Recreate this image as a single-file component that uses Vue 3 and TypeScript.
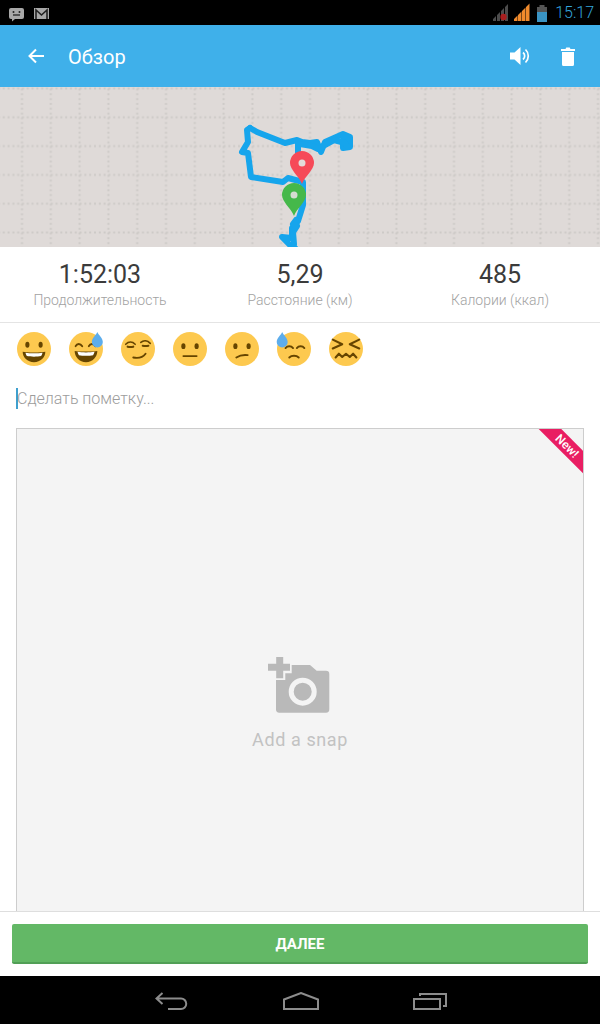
<script setup lang="ts">
const stats = [
  { value: '1:52:03', label: 'Продолжительность' },
  { value: '5,29', label: 'Расстояние (км)' },
  { value: '485', label: 'Калории (ккал)' },
]
const routeTop = '250,128 257,132 285,143 297,140 302,142 310,143 317,142 321,152 325,142 343,134 350,137 350,147 343,148 343,140 350,138'
const routeTopBack = '300,144 312,146 318,149 323,146 334,140 345,143 347,146'
const routeLeft = '250,128 247,130 248,142 242,152 248,153 251,177 283,182 288,178 303,182 303,205 298,221 292,228 292,238 282,237 290,245 295,248'
const routeLower = '296,220 293,224 297,226 293,232 294,244'
const routeBranch = '298,142 298,155'
</script>

<template>
  <div class="screen">
    <div class="status">
      <svg class="status-left" width="50" height="25" viewBox="0 0 50 25">
        <path d="M11 8h11a2 2 0 0 1 2 2v7a2 2 0 0 1-2 2h-7l-3 2.500v-2.500h-1a2 2 0 0 1-2-2v-7a2 2 0 0 1 2-2z" fill="#a8a8a8" />
        <circle cx="13.500" cy="12" r="1" fill="#222" />
        <circle cx="19.500" cy="12" r="1" fill="#222" />
        <path d="M13 15h7" stroke="#222" stroke-width="1.300" />
        <rect x="34" y="8" width="15" height="11" fill="#a8a8a8" />
        <path d="M36 19v-9l5.500 5 5.500-5v9" fill="none" stroke="#222" stroke-width="1.600" />
      </svg>
      <div class="status-right">
        <svg width="56" height="25" viewBox="0 0 56 25">
          <path d="M1 21v-2l3-3v5zM5 21v-6l3-3v9zM9 21V11l3-3v13zM13 21V7l3-3v17z" fill="#4c4c4c" />
          <circle cx="11.500" cy="17" r="3.200" fill="#a81e1e" />
          <path d="M22 21v-2l3.500-3.500V21zM26 21v-6l3.500-3.500V21zM30 21V11l3.500-3.500V21zM34 21V7l3.500-3.500V21z" fill="#f08a2c" />
          <rect x="45" y="7" width="10" height="15" fill="#555" />
          <rect x="47.500" y="5" width="5" height="2" fill="#555" />
          <rect x="45" y="12" width="10" height="10" fill="#3a94c4" />
        </svg>
        <span class="time">15:17</span>
      </div>
    </div>

    <header class="appbar">
      <svg class="back" width="18" height="18" viewBox="0 0 18 18">
        <path d="M17 9H3M9 2.500 2.500 9 9 15.500" fill="none" stroke="#fff" stroke-width="2" />
      </svg>
      <h1 class="title">Обзор</h1>
      <svg class="speaker" width="22" height="20" viewBox="0 0 22 20">
        <path d="M0 6.500h4.500L10.500 1v18l-6-5.500H0z" fill="#fff" />
        <path d="M13 6.500a4.500 4.500 0 0 1 0 7M15.500 3.500a9 9 0 0 1 0 13" fill="none" stroke="#fff" stroke-width="1.700" />
      </svg>
      <svg class="trash" width="14" height="19" viewBox="0 0 14 19">
        <path d="M1 5h12v12.500a1.500 1.500 0 0 1-1.500 1.500h-9A1.500 1.500 0 0 1 1 17.500zM0 2h4.500l.8-1.500h3.400L9.500 2H14v2H0z" fill="#fff" />
      </svg>
    </header>

    <div class="map">
      <svg class="map-svg" width="600" height="160" viewBox="0 87 600 160">
        <defs>
          <pattern id="grid" x="7.600" y="74.100" width="28.800" height="28.800" patternUnits="userSpaceOnUse">
            <path d="M14.400 0V28.800" stroke="#cdcac7" stroke-width="2" stroke-dasharray="2 2.800" fill="none" />
            <path d="M0 14.400H28.800" stroke="#cdcac7" stroke-width="2" stroke-dasharray="2 2.800" fill="none" />
          </pattern>
        </defs>
        <rect x="0" y="87" width="600" height="160" fill="#dfdad8" />
        <rect x="0" y="87" width="600" height="160" fill="url(#grid)" />
        <g fill="none" stroke="#16a5ec" stroke-width="6" stroke-linejoin="round" stroke-linecap="round">
          <polyline :points="routeTop" />
          <polyline :points="routeTopBack" />
          <polyline :points="routeLeft" />
          <polyline :points="routeLower" />
          <polyline :points="routeBranch" />
        </g>
        <path d="M302 184c-3-8-12-14-12-21a12 12 0 0 1 24 0c0 7-9 13-12 21z" fill="#f64a58" />
        <circle cx="302" cy="163" r="3.500" fill="#e4dcda" />
        <path d="M294 216c-3-8-12-14-12-21a12 12 0 0 1 24 0c0 7-9 13-12 21z" fill="#45b84a" />
        <circle cx="294" cy="195" r="3.500" fill="#d5dcd0" />
      </svg>
    </div>

    <section class="stats">
      <div v-for="s in stats" :key="s.label" class="stat">
        <div class="stat-value">{{ s.value }}</div>
        <div class="stat-label">{{ s.label }}</div>
      </div>
    </section>

    <div class="emojis">
      <svg class="emoji" viewBox="0 0 36 36">
        <circle cx="18" cy="18" r="18" fill="#fdc94f" />
        <ellipse cx="11" cy="13.500" rx="2.200" ry="3.200" fill="#664500" />
        <ellipse cx="25" cy="13.500" rx="2.200" ry="3.200" fill="#664500" />
        <path d="M6 21c4 1 20 1 24 0 0 6-5 11-12 11S6 27 6 21z" fill="#664500" />
        <path d="M9 22c5 .8 13 .8 18 0-.3 1.500-1 3-1.500 3.500-4 .8-11 .8-15 0-.5-.5-1.200-2-1.500-3.500z" fill="#fff" />
      </svg>
      <svg class="emoji" viewBox="0 0 36 36">
        <circle cx="18" cy="18" r="18" fill="#fdc94f" />
        <path d="M7 15c1.500-3 5-3 7 0M21 15c1.500-3 5-3 7 0" fill="none" stroke="#664500" stroke-width="2" stroke-linecap="round" />
        <path d="M6 20c4 1 20 1 24 0 0 6-5 12-12 12S6 26 6 20z" fill="#664500" />
        <path d="M9 21c5 .8 13 .8 18 0-.3 1.500-1 3-1.500 3.500-4 .8-11 .8-15 0-.5-.5-1.200-2-1.500-3.500z" fill="#fff" />
        <path d="M30 0c-1 3-5.800 6-5.800 10.500a5.800 5.800 0 0 0 11.600 0C35.800 6 31 3 30 0z" fill="#5dadec" />
      </svg>
      <svg class="emoji" viewBox="0 0 36 36">
        <circle cx="18" cy="18" r="18" fill="#fdc94f" />
        <path d="M5 13c3-3 7-3 10 0M21 11c3-2.500 7-2 10 1" fill="none" stroke="#664500" stroke-width="1.700" stroke-linecap="round" />
        <path d="M7 15.500c2 .5 4 .5 6 0M23 14.500c2 .5 4 .5 6 0" fill="none" stroke="#664500" stroke-width="2.200" stroke-linecap="round" />
        <path d="M13 27c5 1 10 0 13-4" fill="none" stroke="#664500" stroke-width="2" stroke-linecap="round" />
      </svg>
      <svg class="emoji" viewBox="0 0 36 36">
        <circle cx="18" cy="18" r="18" fill="#fdc94f" />
        <ellipse cx="11" cy="15" rx="2.200" ry="3" fill="#664500" />
        <ellipse cx="25" cy="15" rx="2.200" ry="3" fill="#664500" />
        <path d="M11 25.500h14" stroke="#664500" stroke-width="2" stroke-linecap="round" />
      </svg>
      <svg class="emoji" viewBox="0 0 36 36">
        <circle cx="18" cy="18" r="18" fill="#fdc94f" />
        <ellipse cx="11" cy="15" rx="2.200" ry="3" fill="#664500" />
        <ellipse cx="25" cy="15" rx="2.200" ry="3" fill="#664500" />
        <path d="M12 27c3-2 8-3 12-2.500" fill="none" stroke="#664500" stroke-width="2" stroke-linecap="round" />
      </svg>
      <svg class="emoji" viewBox="0 0 36 36">
        <circle cx="18" cy="18" r="18" fill="#fdc94f" />
        <path d="M9 17c2-2.500 6-2.500 8 0M21 17c2-2.500 6-2.500 8 0" fill="none" stroke="#664500" stroke-width="2" stroke-linecap="round" />
        <path d="M13 27c2.500-2.500 7.500-2.500 10 0" fill="none" stroke="#664500" stroke-width="2" stroke-linecap="round" />
        <path d="M5.500 0c-1 3-5.800 6-5.800 10.500a5.800 5.800 0 0 0 11.600 0C11.300 6 6.500 3 5.500 0z" fill="#5dadec" />
      </svg>
      <svg class="emoji" viewBox="0 0 36 36">
        <circle cx="18" cy="18" r="18" fill="#fdc94f" />
        <path d="M4 8l10 5-10 4.500M32 8l-10 5 10 4.500" fill="none" stroke="#664500" stroke-width="2.200" stroke-linecap="round" stroke-linejoin="round" />
        <path d="M7 27l3.500-4 3.500 3.500 4-3.500 4 3.500 3.500-3.500 3.500 4" fill="none" stroke="#664500" stroke-width="2.200" stroke-linecap="round" stroke-linejoin="round" />
      </svg>
    </div>

    <div class="note">
      <span class="caret"></span>
      <span class="note-text">Сделать пометку...</span>
    </div>

    <div class="scroll">
      <div class="card">
        <div class="ribbon">New!</div>
        <svg class="camera" width="62" height="57" viewBox="0 0 62 57">
          <path d="M23.700 8H42l6.700 5.700H58a3.300 3.300 0 0 1 3.300 3.300v35.300a3.300 3.300 0 0 1-3.300 3.400H11.300A3.300 3.300 0 0 1 8 52.300V23h9.300v-6.700h6.400z" fill="#b9b9b9" />
          <path d="M0 10.300h22M11.700 0v21.300" fill="none" stroke="#b9b9b9" stroke-width="7" />
          <circle cx="34.700" cy="34.700" r="11.500" fill="none" stroke="#f4f4f4" stroke-width="5" />
        </svg>
        <div class="snap">Add a snap</div>
      </div>
    </div>

    <footer class="footer">
      <button class="next" type="button">ДАЛЕЕ</button>
    </footer>

    <nav class="nav">
      <svg class="nav-back" width="34" height="20" viewBox="0 0 34 20">
        <path d="M7.500 1 1.500 6.500 7.500 12M2 6.500h24a4.500 4.500 0 0 1 0 10.500H13" fill="none" stroke="#8c8c8c" stroke-width="2" />
      </svg>
      <svg width="36" height="20" viewBox="0 0 36 20">
        <path d="M1 7.500 18 1l17 6.500V17H1z" fill="none" stroke="#8c8c8c" stroke-width="2" />
      </svg>
      <svg class="nav-recents" width="34" height="20" viewBox="0 0 34 20">
        <path d="M1 7h26v10H1zM7 4V2h26v12h-3" fill="none" stroke="#8c8c8c" stroke-width="2" />
      </svg>
    </nav>
  </div>
</template>

<style scoped>
.screen {
  width: 600px;
  height: 1024px;
  display: flex;
  flex-direction: column;
  overflow: hidden;
  background: #fff;
  font-family: Roboto, "Liberation Sans", sans-serif;
}
.status {
  height: 25px;
  flex: none;
  background: #000;
  display: flex;
  justify-content: space-between;
  align-items: center;
}
.status-left { display: block; }
.status-right {
  display: flex;
  align-items: center;
  gap: 7px;
  padding: 0 6px 0 0;
}
.time {
  color: #33a5dc;
  font-size: 16px;
  font-weight: 300;
}
.appbar {
  height: 62px;
  flex: none;
  background: #3fb0ea;
  display: flex;
  align-items: center;
  padding: 0 25px 0 27px;
}
.back { flex: none; }
.title {
  margin: 2px 0 0 23px;
  flex: 1;
  color: #fff;
  font-size: 20px;
  font-weight: 400;
}
.speaker { margin-right: 29px; }
.map {
  height: 160px;
  flex: none;
}
.map-svg { display: block; }
.stats {
  height: 75px;
  flex: none;
  display: grid;
  grid-template-columns: repeat(3, 1fr);
  border-bottom: 1px solid #e4e4e4;
  box-sizing: content-box;
}
.stat {
  text-align: center;
  padding-top: 14px;
}
.stat-value {
  color: #3b3b3b;
  font-size: 25px;
  line-height: 28px;
}
.stat-label {
  margin-top: 2px;
  color: #a2a2a2;
  font-size: 14px;
  font-weight: 300;
  line-height: 18px;
}
.emojis {
  display: flex;
  gap: 18px;
  padding: 9px 17px 0;
  flex: none;
}
.emoji {
  width: 34px;
  height: 34px;
  display: block;
  overflow: visible;
}
.note {
  flex: none;
  height: 22px;
  margin-top: 21px;
  padding-left: 16px;
  display: flex;
  align-items: center;
}
.caret {
  width: 2px;
  height: 21px;
  background: #3f9fce;
  flex: none;
}
.note-text {
  margin-left: -1px;
  color: #9c9c9c;
  font-size: 16px;
  font-weight: 300;
}
.scroll {
  flex: 1;
  min-height: 0;
  overflow: hidden;
  padding: 19px 16px 0;
}
.card {
  position: relative;
  height: 568px;
  border: 1px solid #cdcdcd;
  background: #f4f4f4;
  box-sizing: border-box;
  overflow: hidden;
  display: flex;
  flex-direction: column;
  align-items: center;
  padding-top: 228px;
}
.ribbon {
  position: absolute;
  top: 8.5px;
  right: -28.5px;
  width: 90px;
  height: 16px;
  background: #e91e63;
  transform: rotate(45deg);
  text-align: center;
  color: #fff;
  font-size: 12px;
  font-weight: 500;
  line-height: 16px;
}
.camera {
  display: block;
  margin-right: 2px;
}
.snap {
  margin-top: 15px;
  color: #c2c2c2;
  font-size: 18px;
  letter-spacing: 0.6px;
}
.footer {
  flex: none;
  height: 65px;
  border-top: 1px solid #dedede;
  background: #fff;
  box-sizing: border-box;
  padding: 12px 12px 0;
}
.next {
  display: block;
  width: 100%;
  height: 40px;
  border: 0;
  border-bottom: 2px solid #519f56;
  border-radius: 2px;
  background: #63b866;
  color: #fff;
  font-family: Roboto, "Liberation Sans", sans-serif;
  font-size: 15px;
  font-weight: 700;
  padding: 2px 0 0;
}
.nav {
  flex: none;
  height: 48px;
  background: #000;
  display: flex;
  justify-content: center;
  align-items: flex-start;
  gap: 95px;
  padding-top: 16px;
  box-sizing: border-box;
}
.nav-back { margin-left: 2px; margin-right: -1px; }
.nav-recents { margin-left: -1px; }
</style>
